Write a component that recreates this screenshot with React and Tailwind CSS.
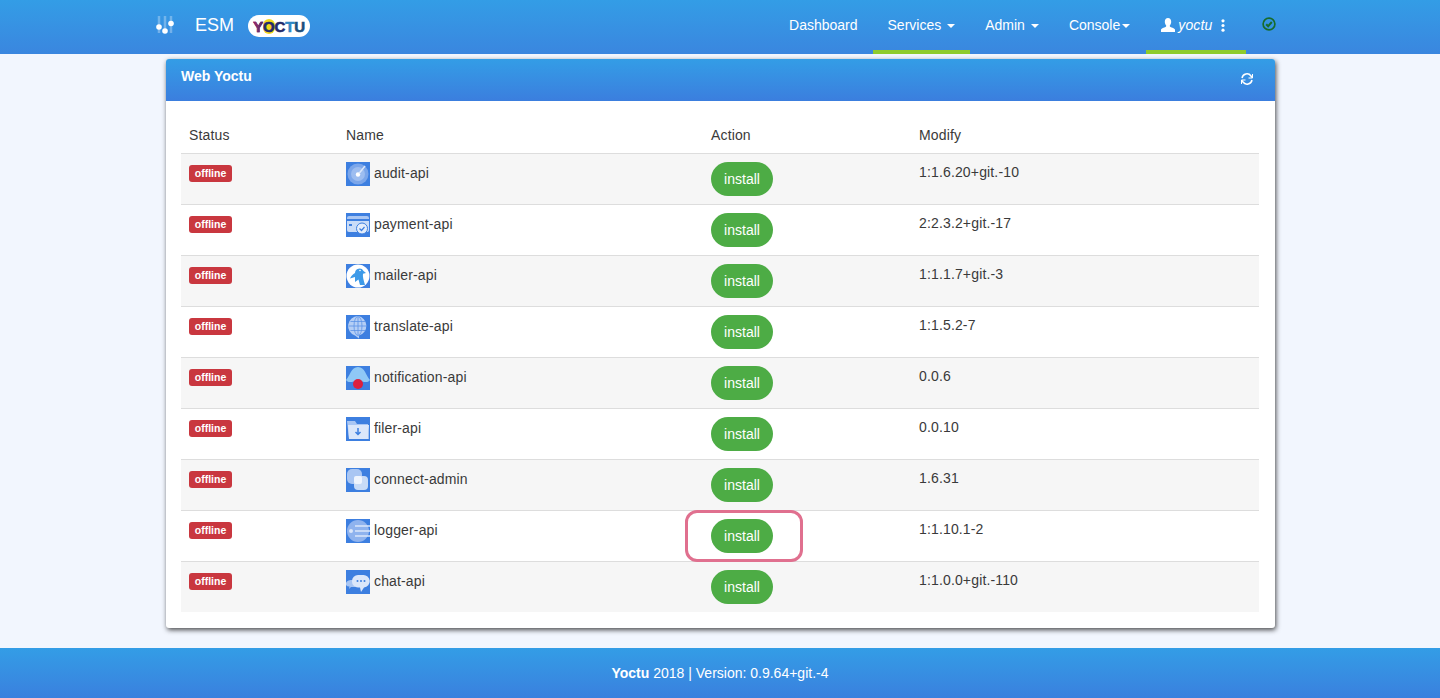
const FONT = "font-['Liberation_Sans',Arial,sans-serif]";

const rows = [
  { name: "audit-api", version: "1:1.6.20+git.-10", icon: "audit" },
  { name: "payment-api", version: "2:2.3.2+git.-17", icon: "payment" },
  { name: "mailer-api", version: "1:1.1.7+git.-3", icon: "mailer" },
  { name: "translate-api", version: "1:1.5.2-7", icon: "translate" },
  { name: "notification-api", version: "0.0.6", icon: "notification" },
  { name: "filer-api", version: "0.0.10", icon: "filer" },
  { name: "connect-admin", version: "1.6.31", icon: "connect" },
  { name: "logger-api", version: "1:1.10.1-2", icon: "logger", marked: true },
  { name: "chat-api", version: "1:1.0.0+git.-110", icon: "chat" },
];

function ServiceIcon({ type }) {
  return (
    <svg viewBox="0 0 24 24" className="h-6 w-6 shrink-0 bg-[#3d7fe0]">
      {type === "audit" && (
        <>
          <circle cx="12" cy="12" r="10.5" fill="#7ba6ea" />
          <circle cx="12" cy="12" r="7" fill="#9dbdf0" />
          <circle cx="12" cy="12.5" r="2.2" fill="#fff" />
          <path d="M13 11.5 19 4" stroke="#dbe7fa" strokeWidth="1.5" />
        </>
      )}
      {type === "payment" && (
        <>
          <path d="M1 5a2 2 0 0 1 2-2h18a2 2 0 0 1 2 2v1H1z" fill="#a9c6f3" />
          <path d="M1 8h22v9a2 2 0 0 1-2 2H3a2 2 0 0 1-2-2z" fill="#c9dcf8" />
          <rect x="3" y="11" width="3" height="2" fill="#3d7fe0" />
          <circle cx="16" cy="15.5" r="5.5" fill="#e3edfb" stroke="#3d7fe0" />
          <path d="m13.5 15.5 2 2 3-3.500" fill="none" stroke="#3d7fe0" strokeWidth="1.200" />
        </>
      )}
      {type === "mailer" && (
        <>
          <circle cx="12" cy="12" r="11.500" fill="#fff" />
          <path d="M9 9a4.500 4.500 0 0 1 8.500-2l2.500 2-3 .8c-.5 3 .5 6 2 11.200h-5l-1.500-5.500L9 18v-5l-5 1.500C5 12 7 10 9 9z" fill="#3d9ae8" />
          <circle cx="14" cy="6.500" r="0.800" fill="#fff" />
        </>
      )}
      {type === "translate" && (
        <>
          <path d="M12 1a10 10 0 0 0-3 19.500l4 3v-3A10 10 0 0 0 12 1z" fill="#b4cef5" />
          <g fill="none" stroke="#5c93e6" strokeWidth="0.800">
            <ellipse cx="12" cy="11" rx="4" ry="9.500" />
            <path d="M12 2v18M3 11h18M4.500 6.500h15M4.500 15.500h15" />
          </g>
        </>
      )}
      {type === "notification" && (
        <>
          <path d="M0 14C4 10 5 1 12 1s8 9 12 13c-3 4-7 1-12 1s-9 3-12-1z" fill="#8fc8f6" />
          <circle cx="12" cy="18" r="5" fill="#dc1f3d" />
        </>
      )}
      {type === "filer" && (
        <>
          <path d="M1 4h8l2 3h11l1 15H3z" fill="#a9c6f3" />
          <path d="M2 8h21l-1 14H3z" fill="#dbe7fa" />
          <path d="M12 11v6m-2.500-2 2.500 2.500 2.500-2.500" fill="none" stroke="#3d7fe0" strokeWidth="1.500" />
        </>
      )}
      {type === "connect" && (
        <>
          <rect x="1" y="1" width="15" height="15" rx="5" fill="#a9c6f3" />
          <rect x="8" y="8" width="14" height="14" rx="4" fill="#c7dbf7" />
          <rect x="8" y="8" width="8" height="8" rx="2" fill="#eef4fd" />
        </>
      )}
      {type === "logger" && (
        <>
          <circle cx="12" cy="12" r="11" fill="#8fb3ee" />
          <circle cx="5" cy="12" r="2" fill="#dbe7fa" />
          <g stroke="#dbe7fa" strokeWidth="1.500">
            <path d="M9 7h15M9 12h15M9 17h15" />
          </g>
        </>
      )}
      {type === "chat" && (
        <>
          <path d="M0 15a5 4 0 0 1 5-5h4v7H5l-2 2 .5-2.500A4 4 0 0 1 0 15z" fill="#a9c6f3" />
          <path d="M6 11a6 6 0 0 1 6-6h5a6 6 0 0 1 1 12.500L15 22l-1-4.500h-2A6 6 0 0 1 6 11z" fill="#dbe7fa" />
          <g fill="#3d7fe0">
            <circle cx="11.500" cy="11" r="1" />
            <circle cx="15" cy="11" r="1" />
            <circle cx="18.500" cy="11" r="1" />
          </g>
        </>
      )}
    </svg>
  );
}

function Caret() {
  return <span className="ml-[6px] inline-block border-x-[4px] border-t-[4px] border-x-transparent border-t-white align-middle" />;
}

function Logo() {
  return (
    <span className="ml-[14px] mt-[15px] flex h-[22px] w-[62px] items-center justify-center rounded-full bg-white text-[15px] font-bold leading-none tracking-[-0.2px] text-[#232a6b] [-webkit-text-stroke:0.6px]">
      <span className="bg-gradient-to-r from-[#c01a63] to-[#232a6b] bg-clip-text text-transparent [-webkit-text-stroke:0.6px_#7a2068]">Y</span>
      <span className="rounded-full bg-[#f2d81c]">O</span>
      <span>C</span>
      <span className="text-[#2f87c4]">T</span>
      <span className="text-[#1d4f7c]">U</span>
    </span>
  );
}

function Navbar() {
  return (
    <header className="flex h-[54px] items-start bg-gradient-to-b from-[#339de6] to-[#3a86df] pl-[155px] text-white">
      <svg viewBox="0 0 20 20" className="mt-[15px] h-5 w-5">
        <g stroke="#fff" strokeOpacity="0.3" strokeWidth="2.500">
          <path d="M4 1v17M10 1v17M16 1v17" />
        </g>
        <g fill="#fff">
          <circle cx="4" cy="12" r="2.800" />
          <circle cx="10" cy="16" r="2.800" />
          <circle cx="16" cy="8.500" r="2.800" />
        </g>
      </svg>
      <span className="ml-5 mt-[14px] text-[18px] leading-[22px]">ESM</span>
      <Logo />
      <nav className="ml-[464px] flex text-[14px] leading-[50px]">
        <a className="h-[54px] px-[15px]">Dashboard</a>
        <a className="h-[54px] border-b-4 border-[#8ecb2c] px-[15px]">Services<Caret /></a>
        <a className="h-[54px] px-[15px]">Admin<Caret /></a>
        <a className="h-[54px] pl-[15px] pr-[16px]">Console<span className="ml-[2px] inline-block border-x-[4px] border-t-[4px] border-x-transparent border-t-white align-middle" /></a>
        <a className="flex h-[54px] w-[100px] items-center border-b-4 border-[#8ecb2c] pl-[15px]">
          <svg viewBox="0 0 14 14" className="h-[14px] w-[14px]" fill="#fff">
            <path d="M7 0c2 0 3.200 1.500 3.200 3.800 0 1.500-.6 2.900-1.400 3.700-.2.600 0 1.100.6 1.400 1.700.7 4 1.400 4.600 2.600V14H0v-2.500c.6-1.200 2.900-1.900 4.600-2.600.6-.3.800-.8.600-1.400C4.400 6.700 3.800 5.300 3.800 3.800 3.800 1.500 5 0 7 0z" />
          </svg>
          <i className="ml-[3px] tracking-[0.15px]">yoctu</i>
          <svg viewBox="0 0 4 14" className="ml-[9px] h-[13px] w-[4px]" fill="#fff">
            <circle cx="2" cy="2" r="1.700" />
            <circle cx="2" cy="7" r="1.700" />
            <circle cx="2" cy="12" r="1.700" />
          </svg>
        </a>
        <span className="ml-[16px] flex h-[48px] items-center">
          <svg viewBox="0 0 14 14" className="h-[14px] w-[14px]" fill="none" stroke="#176c2c" strokeWidth="1.700">
            <circle cx="7" cy="7" r="5.900" />
            <path d="m4.200 7.200 2 2 3.600-4.200" strokeWidth="2" />
          </svg>
        </span>
      </nav>
    </header>
  );
}

function Table() {
  return (
    <table className="w-full table-fixed border-collapse text-left text-[14px] leading-5 tracking-[0.15px] text-[#3a3a3a]">
      <colgroup>
        <col className="w-[157px]" />
        <col className="w-[365px]" />
        <col className="w-[208px]" />
        <col />
      </colgroup>
      <thead>
        <tr className="h-[36px]">
          <th className="px-2 pt-[8px] align-top font-normal">Status</th>
          <th className="px-2 pt-[8px] align-top font-normal">Name</th>
          <th className="px-2 pt-[8px] align-top font-normal">Action</th>
          <th className="px-2 pt-[8px] align-top font-normal">Modify</th>
        </tr>
      </thead>
      <tbody>
        {rows.map((row, index) => (
          <tr key={row.name} className={`h-[51px] border-t border-[#ddd] ${index % 2 === 0 ? "bg-[#f6f6f6]" : "bg-white"}`}>
            <td className="px-2 pt-[11px] align-top">
              <span className="block h-[17px] w-[43px] rounded-[3px] bg-[#c9373f] text-center text-[10.500px] font-bold leading-[17px] tracking-normal text-white">offline</span>
            </td>
            <td className="px-2 pt-[8px] align-top">
              <div className="flex items-start gap-1">
                <ServiceIcon type={row.icon} />
                <span className="mt-px leading-[20px]">{row.name}</span>
              </div>
            </td>
            <td className="relative px-2 pt-[8px] align-top">
              <button className="block h-[34px] w-[62px] rounded-full bg-[#4dac45] text-[14px] tracking-normal text-white">install</button>
              {row.marked && (
                <span className="absolute left-[-18px] top-[-1px] h-[52px] w-[118px] rounded-[12px] border-[3px] border-[#e0708f]" />
              )}
            </td>
            <td className="px-2 pt-[8px] align-top">{row.version}</td>
          </tr>
        ))}
      </tbody>
    </table>
  );
}

export default function App() {
  return (
    <div className={`flex h-[698px] flex-col overflow-hidden bg-[#f2f6fe] ${FONT}`}>
      <Navbar />
      <main className="h-[594px] pl-[166px] pr-[165px] pt-[5px]">
        <section className="h-[569px] overflow-hidden rounded-[3px] bg-white shadow-[1px_2px_5px_rgba(0,0,0,0.7)]">
          <div className="flex h-[42px] items-start justify-between bg-gradient-to-b from-[#339de6] to-[#3b7ede] pl-[15px] pr-[21px] pt-[7px] text-white">
            <h2 className="text-[14px] font-bold leading-5">Web Yoctu</h2>
            <svg viewBox="0 0 14 14" className="mt-[6px] h-[14px] w-[14px]" fill="none" stroke="#fff" strokeWidth="1.500">
              <path d="M2 6a5 5 0 0 1 9-2l1 1.500M12 8a5 5 0 0 1-9 2L2 8.500" />
              <path d="M12.500 2v4h-4M1.500 12V8h4" strokeWidth="1" />
            </svg>
          </div>
          <div className="pl-[15px] pr-[16px] pt-[16px]">
            <Table />
          </div>
        </section>
      </main>
      <footer className="flex h-[50px] items-center justify-center bg-gradient-to-b from-[#339de6] to-[#3a80de] text-[14px] text-white">
        <b>Yoctu</b>&nbsp;2018 | Version: 0.9.64+git.-4
      </footer>
    </div>
  );
}
